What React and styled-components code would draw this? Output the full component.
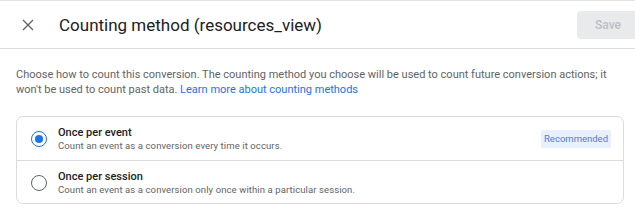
import React, { useState } from "react";
import styled, { createGlobalStyle } from "styled-components";

const Global = createGlobalStyle`
  html, body { margin: 0; padding: 0; background: #fff; }
  body { font-family: Roboto, "Noto Sans", Arial, sans-serif; -webkit-font-smoothing: antialiased; }
  * { box-sizing: border-box; }
`;

const Page = styled.div`
  width: 635px;
  height: 215px;
  overflow: hidden;
  background: #fff;
`;

const Header = styled.header`
  height: 49px;
  display: flex;
  align-items: center;
  border-top: 1px solid #e3e3e3;
  border-bottom: 1px solid #dadce0;
  padding-left: 18px;
`;

const CloseButton = styled.button`
  width: 20px;
  height: 20px;
  border: 0;
  background: none;
  padding: 0;
  display: flex;
  align-items: center;
  justify-content: center;
  color: #5f6368;
  cursor: pointer;
`;

const Title = styled.h1`
  margin: 0 0 0 21px;
  font-family: Roboto, Arial, sans-serif;
  font-weight: 400;
  font-size: 17px;
  color: #202124;
  flex: 1;
  white-space: nowrap;
`;

const SaveButton = styled.button`
  width: 64px;
  height: 28px;
  margin-right: -6px;
  border: 0;
  border-radius: 4px;
  background: #e9eaeb;
  color: #bcbfc3;
  font-family: Roboto, Arial, sans-serif;
  font-size: 12px;
  font-weight: 500;
  text-align: left;
  padding: 0 0 0 18px;
`;

const Content = styled.div`
  padding: 18px 16px 0 16px;
`;

const Description = styled.p`
  margin: 0;
  font-size: 11px;
  line-height: 15px;
  color: #5f6368;
`;

const Link = styled.a`
  color: #1a73e8;
  text-decoration: none;
`;

const Card = styled.div`
  margin-top: 19px;
  width: 608px;
  border: 1px solid #dadce0;
  border-radius: 7px;
`;

const Option = styled.label`
  display: flex;
  align-items: center;
  height: ${(p) => p.$h}px;
  padding: 1px 12px 0 14px;
  & + & { border-top: 1px solid #dadce0; }
  cursor: pointer;
`;

const Radio = styled.span`
  width: 16px;
  height: 16px;
  border-radius: 50%;
  border: 1.5px solid ${(p) => (p.$checked ? "#1a73e8" : "#5f6368")};
  display: flex;
  align-items: center;
  justify-content: center;
  flex-shrink: 0;
  &::after {
    content: "";
    width: 8px;
    height: 8px;
    border-radius: 50%;
    background: #1a73e8;
    display: ${(p) => (p.$checked ? "block" : "none")};
  }
`;

const OptionText = styled.div`
  margin-left: 11px;
  flex: 1;
  display: flex;
  flex-direction: column;
`;

const OptionTitle = styled.div`
  font-size: 11px;
  font-weight: 500;
  color: #202124;
  line-height: 13px;
`;

const OptionSub = styled.div`
  font-size: 9.5px;
  color: #5f6368;
  line-height: 13px;
  letter-spacing: 0.1px;
`;

const Chip = styled.span`
  background: #e8f0fe;
  color: #4a7fdc;
  font-size: 9.5px;
  line-height: 18px;
  padding: 0 3px;
  border-radius: 2px;
`;

const options = [
  {
    id: "event",
    title: "Once per event",
    sub: "Count an event as a conversion every time it occurs.",
    chip: "Recommended",
    h: 43,
  },
  {
    id: "session",
    title: "Once per session",
    sub: "Count an event as a conversion only once within a particular session.",
    h: 43,
  },
];

export default function App() {
  const [value, setValue] = useState("event");
  return (
    <Page>
      <Global />
      <Header>
        <CloseButton aria-label="Close">
          <svg width="12" height="12" viewBox="0 0 12 12">
            <path d="M1 1L11 11M11 1L1 11" stroke="currentColor" strokeWidth="1.4" />
          </svg>
        </CloseButton>
        <Title>Counting method (resources_view)</Title>
        <SaveButton disabled>Save</SaveButton>
      </Header>
      <Content>
        <Description>
          Choose how to count this conversion. The counting method you choose will be used to count future
          conversion actions; it won't be used to count past data.{" "}
          <Link href="#">Learn more about counting methods</Link>
        </Description>
        <Card>
          {options.map((o) => (
            <Option key={o.id} $h={o.h} onClick={() => setValue(o.id)}>
              <Radio $checked={value === o.id} />
              <OptionText>
                <OptionTitle>{o.title}</OptionTitle>
                <OptionSub>{o.sub}</OptionSub>
              </OptionText>
              {o.chip && <Chip>{o.chip}</Chip>}
            </Option>
          ))}
        </Card>
      </Content>
    </Page>
  );
}
